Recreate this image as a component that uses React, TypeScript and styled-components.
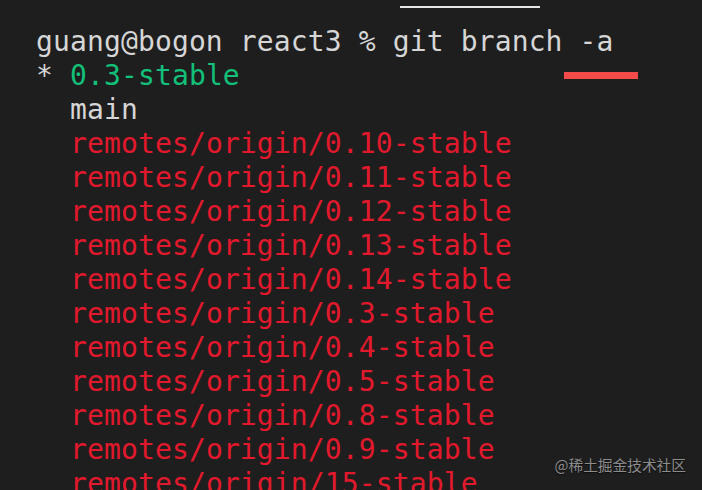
import React from "react";
import styled, { createGlobalStyle } from "styled-components";

const Global = createGlobalStyle`
  html, body { margin: 0; padding: 0; background: #1e1e1e; }
  body { width: 702px; height: 490px; overflow: hidden; }
`;

const Screen = styled.div`
  position: relative;
  width: 702px;
  height: 490px;
  background: #1e1e1e;
  overflow: hidden;
  box-sizing: border-box;
  padding-left: 36px;
  font-family: "DejaVu Sans Mono", "Liberation Mono", monospace;
  font-size: 28px;
  letter-spacing: 0.13px;
  line-height: 34px;
`;

const TabRule = styled.div`
  width: 140px;
  height: 2px;
  margin: 6px 0 17px 364px;
  background: #e6e6e6;
`;

const Output = styled.div`
  display: flex;
  flex-direction: column;
`;

type Tone = "plain" | "current" | "remote";

const Line = styled.div<{ $tone?: Tone; $indent?: boolean }>`
  white-space: pre;
  height: 34px;
  padding-left: ${(p) => (p.$indent ? "34px" : "0")};
  color: ${(p) =>
    p.$tone === "current" ? "#13c07a" : p.$tone === "remote" ? "#e2192c" : "#d6d6d6"};
`;

const Span = styled.span<{ $tone?: Tone }>`
  color: ${(p) => (p.$tone === "current" ? "#13c07a" : "inherit")};
`;

const Marker = styled.div`
  position: absolute;
  left: 564px;
  top: 72px;
  width: 74px;
  height: 7px;
  background: #f34a4a;
`;

const Watermark = styled.div`
  position: absolute;
  right: 16px;
  top: 455px;
  font-family: "Noto Sans CJK SC", "Noto Sans", sans-serif;
  font-size: 14.7px;
  letter-spacing: 0;
  line-height: 20px;
  color: #8c8c8c;
  text-shadow: 0 1px 1px rgba(0, 0, 0, 0.6);
`;

const remotes = [
  "0.10-stable",
  "0.11-stable",
  "0.12-stable",
  "0.13-stable",
  "0.14-stable",
  "0.3-stable",
  "0.4-stable",
  "0.5-stable",
  "0.8-stable",
  "0.9-stable",
  "15-stable",
];

export default function App() {
  return (
    <Screen>
      <Global />
      <TabRule />
      <Output>
        <Line>guang@bogon react3 % git branch -a</Line>
        <Line>
          {"* "}
          <Span $tone="current">0.3-stable</Span>
        </Line>
        <Line $indent>main</Line>
        {remotes.map((r) => (
          <Line key={r} $indent $tone="remote">
            remotes/origin/{r}
          </Line>
        ))}
      </Output>
      <Marker />
      <Watermark>@稀土掘金技术社区</Watermark>
    </Screen>
  );
}
